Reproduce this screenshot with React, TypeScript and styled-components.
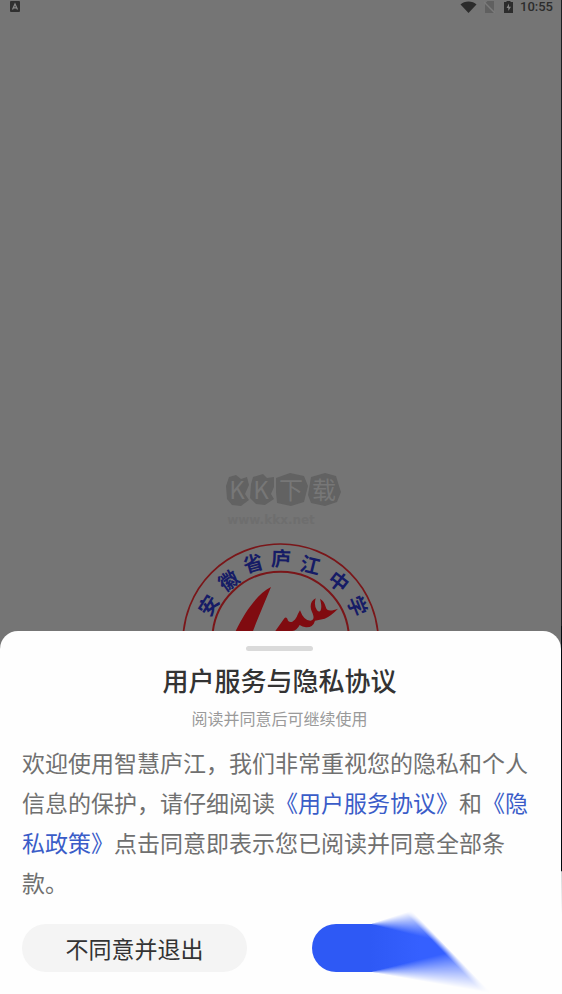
import React from "react";
import styled, { createGlobalStyle } from "styled-components";

const GlobalStyle = createGlobalStyle`
  *, *::before, *::after { box-sizing: border-box; }
  body {
    margin: 0;
    background: #757575;
    font-family: "Noto Sans CJK SC", "Noto Sans", sans-serif;
  }
`;

const Page = styled.div`
  display: flex;
  min-height: 100vh;
`;

const Screen = styled.div`
  flex: 1;
  min-width: 0;
  display: flex;
  flex-direction: column;
  background: #757575;
`;

const ScreenEdge = styled.div`
  width: 1px;
  background: linear-gradient(#1c2022 0 63%, #020a0e 63% 87.6%, #d4d8d8 87.7%, #fdfdfd 92%);
`;

const StatusBar = styled.header`
  display: flex;
  align-items: center;
  justify-content: space-between;
  height: 13px;
  padding: 0 8px 0 10px;
  color: #2c2c2c;
`;

const StatusGroup = styled.div`
  display: flex;
  align-items: center;
`;

const StatusIcon = styled.svg<{ $gap?: number }>`
  display: block;
  margin-right: ${(p) => p.$gap ?? 0}px;
`;

const Clock = styled.time`
  font: 500 13px/13px Roboto, sans-serif;
`;

const Stage = styled.main`
  flex: 1;
  display: flex;
  flex-direction: column;
  align-items: center;
  justify-content: flex-end;
`;

const Watermark = styled.svg`
  display: block;
`;

const Emblem = styled.svg`
  display: block;
`;

const Sheet = styled.section`
  display: flex;
  flex-direction: column;
  padding: 15px 24px 22px 22px;
  background: #fefefe;
  border-radius: 18px 18px 0 0;
`;

const Handle = styled.div`
  align-self: center;
  width: 67px;
  height: 5px;
  border-radius: 3px;
  background: #dadada;
`;

const Title = styled.h1`
  margin: 11px 0 0;
  font-size: 26px;
  line-height: 36px;
  font-weight: 500;
  text-align: center;
  color: #333;
`;

const Subtitle = styled.p`
  margin: 8px 0 0;
  font-size: 16px;
  line-height: 24px;
  font-weight: 400;
  text-align: center;
  color: #9a9a9a;
`;

const Terms = styled.p`
  margin: 12px 0 0;
  font-size: 23px;
  line-height: 40px;
  font-weight: 400;
  color: #707070;
`;

const TermsLink = styled.a`
  color: #3a5cc8;
  text-decoration: none;
`;

const Actions = styled.div`
  display: flex;
  gap: 65px;
  margin-top: 22px;
`;

const ActionButton = styled.button`
  flex: 1;
  height: 48px;
  padding: 0;
  border: 0;
  border-radius: 24px;
  font: inherit;
  font-size: 23px;
  font-weight: 400;
  color: #333;
  background: #f4f4f4;
  cursor: pointer;
`;

const AgreeButton = styled(ActionButton)`
  position: relative;
  background: linear-gradient(to right, #2e59f5 58px, transparent 58px);
`;

const Glow = styled.span`
  position: absolute;
  left: 58px;
  top: -13px;
  width: 119px;
  height: 83px;
  background: linear-gradient(to right, #2e59f5, #3560ff 50px);
  mask-image:
    conic-gradient(at 0 13px, transparent 72deg, #000 104deg 180deg, transparent 180deg),
    conic-gradient(at 0 61px, #000 76deg, transparent 100deg),
    linear-gradient(46deg, #000 82px, transparent 88px);
  mask-composite: intersect;
`;

const SEAL_CHARS: { char: string; x: number; y: number; turn: number }[] = [
  { char: "安", x: 113, y: 226, turn: -58 },
  { char: "徽", x: 173, y: 152, turn: -36 },
  { char: "省", x: 246, y: 100, turn: -16 },
  { char: "庐", x: 330, y: 86, turn: 2 },
  { char: "江", x: 418, y: 106, turn: 14 },
  { char: "中", x: 503, y: 155, turn: 38 },
  { char: "学", x: 558, y: 228, turn: 68 },
];

export default function App() {
  return (
    <>
      <GlobalStyle />
      <Page>
        <Screen>
          <StatusBar>
            <StatusIcon width="10" height="11" viewBox="0 0 10 11" aria-hidden="true">
              <rect width="10" height="11" rx="1" fill="#303030" />
              <path d="M2.5 8.5 5 3l2.500 5.500M3.500 6.800h3" fill="none" stroke="#8a8a8a" strokeWidth="1.200" />
            </StatusIcon>
            <StatusGroup>
              <StatusIcon $gap={7} width="17" height="12" viewBox="0 0 17 12" aria-hidden="true">
                <path d="M0.500 3.500C4-.5 13-.5 16.500 3.500L8.500 12Z" fill="#2c2c2c" />
              </StatusIcon>
              <StatusIcon $gap={9} width="11" height="12" viewBox="0 0 11 12" aria-hidden="true">
                <path d="M3.500 0H10v12H1V2.500Z" fill="#606060" />
                <path d="M0 1 11 12" stroke="#7b7b7b" strokeWidth="1.500" />
              </StatusIcon>
              <StatusIcon $gap={7} width="9" height="12" viewBox="0 0 9 12" aria-hidden="true">
                <path d="M2.500 0h4v1H9v11H0V1h2.500Z" fill="#2c2c2c" />
                <path d="M5 2.500 2.500 7H4.300v3L7 5.800H5Z" fill="#858585" />
              </StatusIcon>
              <Clock>10:55</Clock>
            </StatusGroup>
          </StatusBar>

          <Stage>
            <Watermark width="160" height="70" viewBox="200 460 160 70" role="img" aria-label="KK下载">
              <g fill="#626262">
                <path d="M228 477l7-2 5 4 6-2 2 8-4 9 4 6-8 6-9-1-5-6-1-13Z" />
                <path d="M252 477l10-3 4 4 7-1v10l-3 7 3 5-9 6-9-1-6-6 1-14Z" />
                <path d="M275 478l14-5 14 3 4 10-4 16-13 4-14-3-1-11Z" />
                <path d="M310 477l14-4 11 3 3 10 2 6-4 10-12 4-14-3-3-8Z" />
              </g>
              <g fill="#777777" fontFamily="'Noto Sans CJK SC', sans-serif" fontSize="24" textAnchor="middle">
                <text x="236" y="499">K</text>
                <text x="260" y="499">K</text>
                <text x="290" y="499">下</text>
                <text x="323" y="499">载</text>
              </g>
              <text
                x="270"
                y="524"
                fill="#6e6e6e"
                fontFamily="'DejaVu Sans', sans-serif"
                fontSize="12"
                fontWeight="700"
                textAnchor="middle"
              >
                www.kkx.net
              </text>
            </Watermark>
            <Emblem width="220" height="101" viewBox="0 0 660 303" role="img" aria-label="安徽省庐江中学">
              <g fill="none" stroke="#7a1619">
                <circle cx="329" cy="335" r="293" strokeWidth="5" />
                <circle cx="329" cy="330" r="205" strokeWidth="6" />
              </g>
              <g fill="#800b10">
                <path d="M300 171C262 190 224 240 194 303H246C262 262 284 210 300 171Z" />
                <path d="M313 303 338 268Q343 258 349 266Q352 279 364 275C378 268 378 254 387 241Q398 272 418 272C432 270 428 257 423 246C415 229 419 212 434 205Q428 228 438 241C450 254 455 232 447 206Q460 214 464 230C467 245 482 243 501 236Q480 258 461 266L432 272Q426 293 405 292Q394 290 386 285Q376 305 357 303Z" />
              </g>
              <g
                fill="#161c66"
                fontFamily="'Noto Sans CJK SC', sans-serif"
                fontSize="60"
                fontWeight="700"
                textAnchor="middle"
              >
                {SEAL_CHARS.map(({ char, x, y, turn }) => (
                  <text key={char} x={x} y={y + 22} transform={`rotate(${turn} ${x} ${y})`}>
                    {char}
                  </text>
                ))}
              </g>
            </Emblem>
          </Stage>

          <Sheet role="dialog" aria-labelledby="sheet-title">
            <Handle />
            <Title id="sheet-title">用户服务与隐私协议</Title>
            <Subtitle>阅读并同意后可继续使用</Subtitle>
            <Terms>
              欢迎使用智慧庐江，我们非常重视您的隐私和个人信息的保护，请仔细阅读
              <TermsLink href="#service">《用户服务协议》</TermsLink>和
              <TermsLink href="#privacy">《隐私政策》</TermsLink>
              点击同意即表示您已阅读并同意全部条款。
            </Terms>
            <Actions>
              <ActionButton type="button">不同意并退出</ActionButton>
              <AgreeButton type="button" aria-label="同意">
                <Glow />
              </AgreeButton>
            </Actions>
          </Sheet>
        </Screen>
        <ScreenEdge />
      </Page>
    </>
  );
}
